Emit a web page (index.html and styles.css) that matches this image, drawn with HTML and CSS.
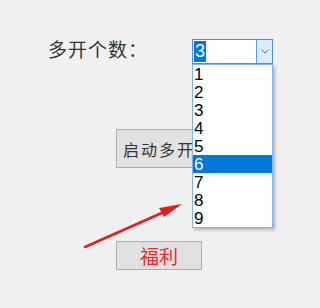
FILE: index.html
```html
<!DOCTYPE html>
<html lang="zh-CN">
<head>
    <meta charset="UTF-8">
    <title>多开设置</title>
    <link rel="stylesheet" href="styles.css">
</head>
<body>

<div class="window">
    <div class="count-row">
        <label class="count-label">多开个数：</label>
        <div class="combo">
            <div class="combo-box">
                <span class="combo-value"><span class="combo-sel">3</span></span>
                <span class="combo-btn">
                    <svg width="8" height="5" viewBox="0 0 8 5"><path d="M0.5 0.5 L4 4 L7.5 0.5" fill="none" stroke="#707070" stroke-width="1"/></svg>
                </span>
            </div>
            <ul class="combo-list">
                <li>1</li>
                <li>2</li>
                <li>3</li>
                <li>4</li>
                <li>5</li>
                <li class="active">6</li>
                <li>7</li>
                <li>8</li>
                <li>9</li>
            </ul>
        </div>
    </div>

    <button class="btn btn-start">启动多开</button>
    <button class="btn btn-gift">福利</button>

    <!-- красная стрелка поверх окна -->
    <svg class="pointer" width="320" height="308" viewBox="0 0 320 308">
        <line x1="85" y1="247" x2="164" y2="212" stroke="#e81c1c" stroke-width="2.6" stroke-linecap="round"/>
        <polygon points="182,204 159,208 164,217" fill="#e81c1c"/>
    </svg>
</div>

</body>
</html>
```

FILE: styles.css
```css
body {
    margin: 0;
    background-color: #f0f0f0;
    font-family: 'Liberation Sans', Arial, sans-serif;
}
.window {
    position: relative;
    width: 320px;
    height: 308px;
    padding-top: 39px;
    box-sizing: border-box;
}
.count-row {
    display: flex;
    align-items: flex-start;
    padding-left: 48px;
}
.count-label {
    width: 144px;
    margin-top: -3px;
    font-family: 'Noto Sans CJK SC', sans-serif;
    font-size: 19px;
    line-height: 25px;
    color: #333;
    letter-spacing: 1px;
}
.combo {
    position: relative;
    z-index: 2;
}
.combo-box {
    display: flex;
    width: 81px;
    height: 25px;
    box-sizing: border-box;
    border: 1px solid #4a90d9;
    background: #fff;
}
.combo-value {
    flex: 1;
    padding: 1px 0 0 1px;
}
.combo-sel {
    display: inline-block;
    background: #0078d7;
    color: #fff;
    font-size: 18px;
    line-height: 21px;
    padding: 0 1px;
}
.combo-btn {
    width: 15px;
    display: flex;
    align-items: center;
    justify-content: center;
    background: #dcecfc;
    border-left: 1px solid #569de5;
}
.combo-list {
    position: absolute;
    top: 25px;
    left: 0;
    width: 81px;
    box-sizing: border-box;
    margin: 0;
    padding: 0;
    list-style: none;
    background: #fff;
    border: 1px solid #7eb4ea;
    box-shadow: 2px 2px 3px rgba(0,0,0,0.25);
}
.combo-list li {
    height: 18px;
    font-size: 17px;
    line-height: 19px;
    padding-left: 1px;
    color: #000;
    overflow: hidden;
}
.combo-list li.active {
    background: #0078d7;
    color: #fff;
}
.btn {
    display: block;
    width: 86px;
    margin-left: 116px;
    background: #e1e1e1;
    border: 1px solid #adadad;
    font-family: 'Noto Sans CJK SC', sans-serif;
    padding: 0;
}
.btn-start {
    height: 39px;
    margin-top: 65px;
    font-size: 16px;
    letter-spacing: 2px;
    color: #333;
}
.btn-gift {
    height: 29px;
    margin-top: 73px;
    font-size: 19px;
    color: #f02828;
}
.pointer {
    position: absolute;
    left: 0;
    top: 0;
    z-index: 3;
    pointer-events: none;
}
```
